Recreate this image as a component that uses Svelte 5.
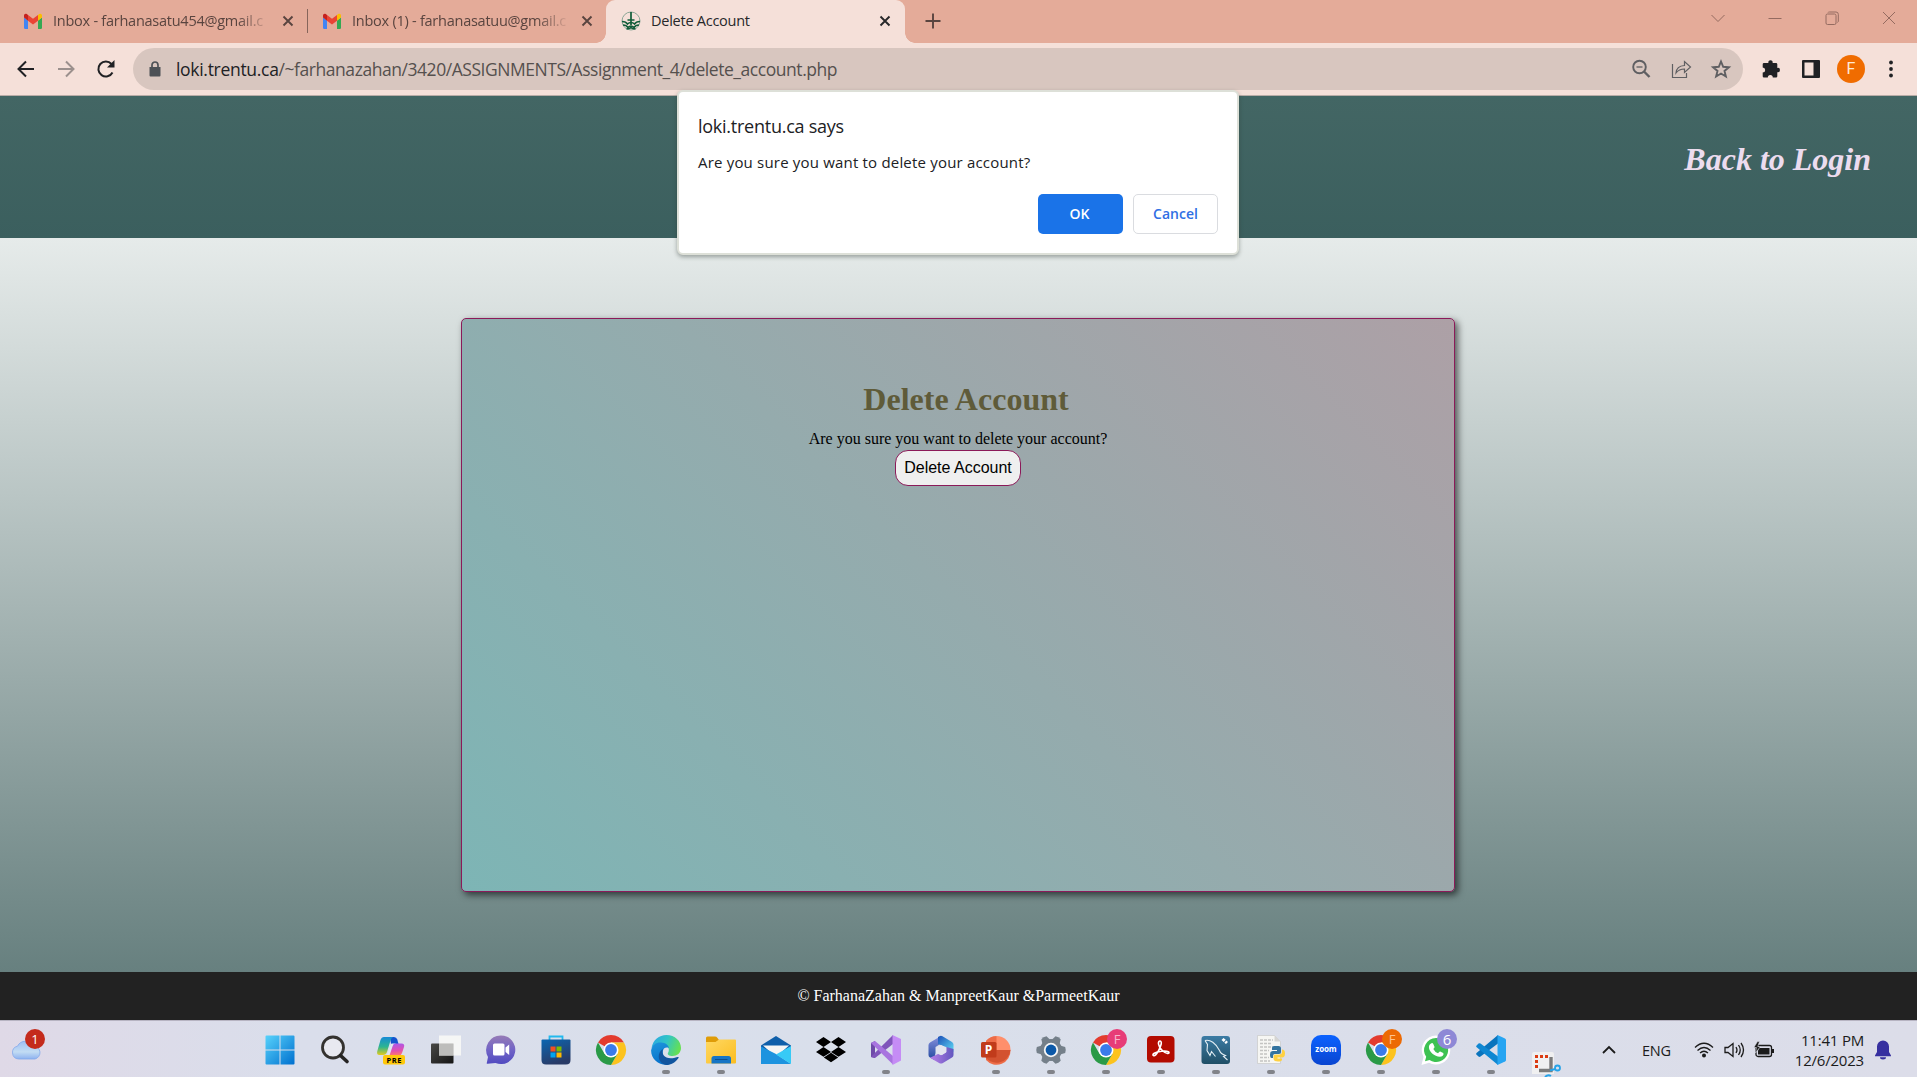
<script>
  const apps = [
    { id: 'start' }, { id: 'search' }, { id: 'copilot' }, { id: 'taskview' }, { id: 'chat' },
    { id: 'store' }, { id: 'chrome' }, { id: 'edge', open: true }, { id: 'files', open: true },
    { id: 'mail' }, { id: 'dropbox' }, { id: 'vs', open: true }, { id: 'm365' },
    { id: 'ppt', open: true }, { id: 'settings', open: true },
    { id: 'chrome', open: true, badge: 'F', tone: 'pink' }, { id: 'acrobat', open: true },
    { id: 'mysql', open: true }, { id: 'python', open: true }, { id: 'zoom', open: true },
    { id: 'chrome', open: true, badge: 'F', tone: 'orange' },
    { id: 'whatsapp', open: true, badge: '6', tone: 'violet' }, { id: 'vscode', open: true },
    { id: 'snip' }
  ];
</script>

{#snippet gmail()}
  <svg class="fav" viewBox="0 0 20 16">
    <path fill="#4285f4" d="M1 4.500 5 7.500V16H2.200Q1 16 1 14.800z" />
    <path fill="#34a853" d="M15 7.500l4-3v10.300q0 1.200-1.200 1.200H15z" />
    <path fill="#fbbc04" d="M15 2l1.200-.9C17.600 0 19 1 19 2.600v2L15 7.700z" />
    <path fill="#ea4335" d="M5 7.700V2l5 3.800L15 2v5.700l-5 3.800z" />
    <path fill="#c5221f" d="M1 4.600v-2C1 1 2.400 0 3.800 1.100L5 2v5.700z" />
  </svg>
{/snippet}

{#snippet cross()}
  <svg class="cross" viewBox="0 0 12 12"><path d="M1.500 1.500l9 9M10.500 1.500l-9 9" /></svg>
{/snippet}

{#snippet icon(id)}
  <svg class="app-icon" viewBox="0 0 30 30">
    {#if id === 'start'}
      <defs><linearGradient id="win" x1="0" y1="0" x2="1" y2="1"><stop offset="0" stop-color="#57d2fb" /><stop offset="1" stop-color="#0070cf" /></linearGradient></defs>
      <path fill="url(#win)" d="M1.500.5H14.500v14H.5v-13Q.5.5 1.500.5zM15.500 .5h13q1 0 1 1v13h-14zM.5 15.500h14v14h-13q-1 0-1-1zM15.500 15.500h14v13q0 1-1 1h-13z" />
    {:else if id === 'search'}
      <circle cx="12" cy="12.500" r="10.500" fill="#e8e9f0" stroke="#34322f" stroke-width="2.800" />
      <path d="M19.500 20.500l6.500 6" stroke="#252423" stroke-width="3.600" stroke-linecap="round" />
    {:else if id === 'copilot'}
      <defs>
        <linearGradient id="cpa" x1="0" y1="0" x2="0" y2="1"><stop offset="0" stop-color="#168bd5" /><stop offset=".55" stop-color="#2db591" /><stop offset="1" stop-color="#e4cb1b" /></linearGradient>
        <linearGradient id="cpb" x1=".3" y1="0" x2=".4" y2="1"><stop offset="0" stop-color="#a958eb" /><stop offset=".6" stop-color="#e24fb0" /><stop offset="1" stop-color="#ff786a" /></linearGradient>
      </defs>
      <path fill="#1454cf" d="M14 2h4q2.500 0 3.300 2.500L22.500 9H15z" />
      <path fill="url(#cpa)" d="M8 2h10q-2.500 0-3.500 3.500L11 17q-1 3-4 3H3.500Q.5 20 1.200 16.500L4.500 5Q5.500 2 8 2z" />
      <path fill="#dfe6f2" d="M15.500 8.500H20l-3 1.500-3.500 10H11z" />
      <path fill="url(#cpb)" d="M19 8.500h6.500q3.500 0 2.500 3.500l-2 6q-.8 2.500-3 2.500H13.500l3-9q.8-3 2.500-3z" />
      <rect x="7" y="20" width="22" height="9.500" rx="2" fill="#ffc80a" />
      <text x="18.300" y="27.600" class="pre">PRE</text>
    {:else if id === 'taskview'}
      <defs><linearGradient id="tva" x1="0" y1="0" x2="1" y2="1"><stop offset="0" stop-color="#484846" /><stop offset="1" stop-color="#151515" /></linearGradient></defs>
      <rect x="0" y="8.500" width="22.500" height="20" rx="1" fill="url(#tva)" />
      <path d="M8 .5h22v20H8z" fill="#f7f7f5" opacity=".92" />
      <path d="M8 8.500h14.500v12H8z" fill="#bdbdbb" />
    {:else if id === 'chat'}
      <defs><linearGradient id="cha" x1="0" y1="0" x2="0" y2="1"><stop offset="0" stop-color="#967bb6" /><stop offset=".5" stop-color="#7164c6" /><stop offset="1" stop-color="#514bc0" /></linearGradient></defs>
      <path fill="url(#cha)" d="M15 .5a14.300 14.300 0 1 1-5.500 27.500L1.500 28.700Q.3 28.700.9 27.500L2 22A14.500 14.500 0 0 1 15 .5z" />
      <rect x="7" y="8.500" width="11.500" height="12" rx="1.500" fill="#fff" />
      <path fill="#fff" d="M19.500 12.500l3.700-3v10.500l-3.700-3z" />
    {:else if id === 'store'}
      <defs><linearGradient id="sta" x1="0" y1="0" x2=".4" y2="1"><stop offset="0" stop-color="#0b66b2" /><stop offset="1" stop-color="#293b67" /></linearGradient></defs>
      <path d="M8.500 5V1.500h13V5" fill="none" stroke="#23b9ee" stroke-width="1.800" />
      <path fill="url(#sta)" d="M1.500 4.500h27q1 0 1 1V25q0 4.500-4.500 4.500H5Q.5 29.500.5 25V5.500q0-1 1-1z" />
      <path fill="#f25022" d="M9.500 11.500h5v5h-5z" /><path fill="#7fba00" d="M15.500 11.500h5v5h-5z" />
      <path fill="#00a4ef" d="M9.500 17.500h5v5h-5z" /><path fill="#ffb900" d="M15.500 17.500h5v5h-5z" />
    {:else if id === 'chrome'}
      <path fill="#e33b2e" d="M15 15 2 7.500A15 15 0 0 1 28 7.500H15z" />
      <path fill="#fcc31e" d="M28 7.500A15 15 0 0 1 15 30l6.500-11.200L15 7.500z" />
      <path fill="#2a9a47" d="M2 7.500A15 15 0 0 0 15 30l6.500-11.200L8.500 18.800z" />
      <circle cx="15" cy="15" r="7.500" fill="#fff" /><circle cx="15" cy="15" r="5.900" fill="#3a7bea" />
    {:else if id === 'edge'}
      <defs>
        <linearGradient id="eda" x1="0" y1=".2" x2="1" y2=".5"><stop offset="0" stop-color="#2aa7e4" /><stop offset=".5" stop-color="#31c5c5" /><stop offset="1" stop-color="#66e052" /></linearGradient>
        <linearGradient id="edb" x1="0" y1="0" x2=".3" y2="1"><stop offset="0" stop-color="#1e96dc" /><stop offset="1" stop-color="#0872cb" /></linearGradient>
      </defs>
      <path fill="url(#eda)" d="M.5 13C2 5 8 0 15.500 0 24 0 30 6 30 13c0 5-4 8-8.500 8-3.500 0-5.500-1.500-4.500-3 3-5-2-9-7-8.500C5 9.800 1.500 11.500.5 13z" />
      <path fill="url(#edb)" d="M.1 15.500C1 9.500 6 7 10 7.500c4.500.4 7.500 2.500 8 5.500-6-2-7.500 4-5 9 2 4 4.500 5.500 7 6.800C11 32 0 26 .1 15.500z" />
      <path fill="#11559f" d="M12 14c-2.500 6 3.500 12 14.500 8 .8-.3 1.500.2 1 1-3 4.500-7.500 7-12.500 7C6 28 6 17 12 14z" />
    {:else if id === 'files'}
      <defs><linearGradient id="fia" x1="0" y1="0" x2="1" y2="1"><stop offset="0" stop-color="#ffd863" /><stop offset="1" stop-color="#fbbd20" /></linearGradient></defs>
      <path fill="#df9c08" d="M0 3q0-1.500 1.500-1.500H9q1.500 0 2.300 1.300L13 5v4H0z" />
      <path fill="url(#fia)" d="M0 7h9.500L13 4.500h16q1 0 1 1v22q0 1-1 1H1q-1 0-1-1z" />
      <path fill="#1675c5" d="M5.500 28.500v-5q0-2.500 2.500-2.500h14.500q2.500 0 2.500 2.500v5z" />
      <path d="M9 24.500h12.500" stroke="#0b4f90" />
    {:else if id === 'mail'}
      <path fill="#0f5faa" d="M15 1l15 9.500v6H0v-6z" /><path fill="#f5f5f5" d="M2 10.500h26L15 22z" />
      <path fill="#1d93df" d="M0 11.500L15 19l15 10H0z" /><path fill="#37caf6" d="M30 11v18L15 19.500z" />
    {:else if id === 'dropbox'}
      <path d="M7.500 2l7.500 5-7.500 5L0 7zM22.500 2L30 7l-7.500 5L15 7zM7.500 12l7.500 5-7.500 4.700L0 17zM22.500 12l7.500 5-7.500 4.700L15 17zM15 17.800l7.200 4.700L15 27.300l-7.200-4.800z" />
    {:else if id === 'vs'}
      <path fill="#6e4aa8" d="M0 8l4-2v17l-4-1z" />
      <path fill="#7f55ba" d="M0 22l4 1L22 9V0L3.300 18.500z" />
      <path fill="#a874df" d="M0 8l4-2L22 21v8.500z" />
      <path fill="#c58cf5" d="M21.500 0L30 4v21.500L21.500 30z" />
    {:else if id === 'm365'}
      <defs>
        <linearGradient id="ma" x1="0" y1="0" x2="0" y2="1"><stop offset="0" stop-color="#8791de" /><stop offset="1" stop-color="#23499f" /></linearGradient>
        <linearGradient id="mb" x1="0" y1="0" x2="1" y2="1"><stop offset="0" stop-color="#1c50b8" /><stop offset="1" stop-color="#60dcf6" /></linearGradient>
        <linearGradient id="mc" x1="0" y1="0" x2="1" y2="0"><stop offset="0" stop-color="#b97fe8" /><stop offset="1" stop-color="#6257bf" /></linearGradient>
      </defs>
      <path fill="url(#ma)" d="M15 1L4 7.500Q2.500 8.500 2.500 10v10q0 1.500 1.500 2.500l4 2.300L9.500 18v-6L19 6z" />
      <path fill="url(#mb)" d="M12 2l1.500-.8Q15 .5 16.500 1.300L26 7q1.500 1 1.500 2.500V17L20 12l-8-3z" />
      <path fill="url(#mc)" d="M27.500 14v6q0 1.500-1.500 2.500l-9.500 5.700q-1.500.8-3 0L4 22.700 12 19l4 1 4.500-3v-5z" />
      <path fill="#e2e4ef" d="M15 10l5 2.800v4.600L15 20.300l-5-2.900v-4.600z" />
    {:else if id === 'ppt'}
      <path fill="#ed6c47" d="M15.500 1A14 14 0 0 0 5 5.700V25a14 14 0 0 0 24.500-10z" />
      <path fill="#ff8f6b" d="M15.500 1a14 14 0 0 1 14 14h-14z" /><path fill="#d35230" d="M3 15h26.500A14 14 0 0 1 3 20z" />
      <rect y="7" width="15.500" height="15.500" rx="1.500" fill="#c13b1b" />
      <text x="7.600" y="19" class="letter">P</text>
    {:else if id === 'settings'}
      <g fill="#75808a">
        <circle cx="15" cy="15" r="11" />
        {#each [0, 60, 120, 180, 240, 300] as a}<path transform="rotate({a + 30} 15 15)" d="M10.500 6L12 .8Q15-.3 18 .8L19.500 6z" />{/each}
      </g>
      <circle cx="15" cy="15" r="7.200" fill="#f6f6f6" /><circle cx="15" cy="15" r="5.400" fill="#0c59a8" />
    {:else if id === 'acrobat'}
      <rect x="1" y="1" width="27.500" height="26.500" rx="4" fill="#b30b00" />
      <path fill="none" stroke="#fff" stroke-width="1.600" d="M7.500 20.500c-2-1 1.500-3.500 8-4.300 7-.9 9 1.800 6.500 2.200-3 .5-9-5-9.500-9.400C12 5 16 5 15.200 9 14.500 12.500 10 22 7.500 20.500z" />
    {:else if id === 'mysql'}
      <defs><linearGradient id="mys" x1="0" y1="0" x2="0" y2="1"><stop offset="0" stop-color="#3c7ca5" /><stop offset="1" stop-color="#204f66" /></linearGradient></defs>
      <rect x=".5" y="1" width="28.500" height="28" rx="3" fill="url(#mys)" />
      <path fill="none" stroke="#e3eef4" stroke-width="1.100" d="M4 5.500c5-1.500 11 3 14.500 10 1 3 3 4 6 5l-2 1 4 3.500M4 5.500l2.500 4-.5 6 3 5 1.500-4 4 5" />
      <path d="M21.500 4l4.500 4" stroke="#fff" stroke-width="3" stroke-dasharray="3 .8" />
    {:else if id === 'python'}
      <path fill="#f6f6f3" stroke="#c9c9c9" stroke-width=".7" d="M1.500.5h17l6 6V28.500h-23z" /><path fill="#d5d5d3" d="M18.500.5l6 6h-6z" />
      <path d="M4 5h13M4 8.500h11M4 12h13M4 15.500h9M4 19h8M4 22.500h9M4 26h10" stroke="#c4c4c2" stroke-width="1.600" stroke-dasharray="3 1" />
      <path fill="#34749f" d="M18 11h4.500q2.500 0 2.500 2.500V17q0 2-2 2h-4q-2 0-2 2v2h-1.500Q14 23 14 19.500t3-3.500h4v-1h-5v-2q0-2 2-2z" />
      <path fill="#ffd140" d="M26 14.500q3 0 3 4t-3 4h-4.500v1H26v1q0 2-4 2t-4.500-2.500v-3q0-1.500 2-1.500h4q2.500 0 2.500-2.500z" />
    {:else if id === 'zoom'}
      <defs><linearGradient id="zo" x1="0" y1="0" x2="0" y2="1"><stop offset="0" stop-color="#0b62ff" /><stop offset="1" stop-color="#0a45d0" /></linearGradient></defs>
      <rect width="30" height="30" rx="10" fill="url(#zo)" /><text x="15" y="17.300" class="zoom">zoom</text>
    {:else if id === 'whatsapp'}
      <path fill="#fff" d="M15 .5A14.500 14.500 0 1 1 8 27.800L.5 30l2-8A14.500 14.500 0 0 1 15 .5z" />
      <path fill="#3dc252" d="M15 3A12 12 0 1 1 8.500 25L4 26.200l1.200-4.500A12 12 0 0 1 15 3z" />
      <path fill="#fff" d="M10 8.500q1.500-1 2.300.5l1.200 2.700q.3.800-1.200 2.300 1.700 3.200 4.700 4.300 1.500-2 2.200-1.700l3 1.500q1 1-.5 2.700c-4 3.700-15-3.300-13.700-9.800q.5-1.600 2-2.500z" />
    {:else if id === 'vscode'}
      <path fill="#0a74bd" d="M2.500 21.500L.3 19.400q-.5-.6.200-1.400L22 0v8.500L4.500 21.500q-1 .8-2 0z" /><path fill="#0f87d2" d="M4.500 8.500L22 21.500V30L.4 12q-.6-.6 0-1.200L2.500 8.600q1-.8 2-.1z" />
      <path fill="#27a5f2" d="M21.500 0L29 3.500q1 .5 1 1.500v20q0 1-1 1.500L21.500 30z" />
    {:else}
      <path fill="#f0f0f1" d="M1 5q0-2 2-2h18q2 0 2 2v20H1z" />
      <path fill="none" stroke="#db3a12" stroke-width="3" stroke-dasharray="3 2" d="M5.500 19V7.500M4 7.500h14" />
      <path d="M8 21.500h12V8" fill="none" stroke="#7b7b7c" stroke-width="3.400" />
      <path d="M19 21.500l5-1.500M14 28q3-3 6-1" stroke="#26a3e8" stroke-width="2" fill="none" /><circle cx="26.500" cy="19" r="2.500" fill="none" stroke="#26a3e8" stroke-width="1.800" />
    {/if}
  </svg>
{/snippet}

<div class="screen">
  <div class="tabs">
    <div class="tab first">{@render gmail()}<span class="title fade">Inbox - farhanasatu454@gmail.c</span>{@render cross()}</div>
    <div class="tab second">{@render gmail()}<span class="title fade">Inbox (1) - farhanasatuu@gmail.c</span>{@render cross()}</div>
    <div class="tab active">
      <svg class="crest" viewBox="0 0 20 20">
        <circle cx="10" cy="10" r="9" fill="none" stroke="#8ba696" />
        <g fill="none" stroke="#105c38" stroke-width="1.700"><path d="M10 1v13M6.500 9h7M1 10.500q4 0 5.500 2.500 1.500-1.500 3.500-1.500t3.500 1.500q1.500-2.500 5.500-2.500M2 14q3.500 0 5 2.500Q8.500 15 10 15t3 1.500q1.500-2.500 5-2.500M5.500 18q3 0 4.500-1.500 1.500 1.500 4.500 1.500" /></g>
      </svg>
      <span class="title">Delete Account</span>{@render cross()}
    </div>
    <svg class="plus" viewBox="0 0 16 16"><path d="M8 .5v15M.5 8h15" /></svg>
    <div class="window-controls">
      <svg viewBox="0 0 14 14"><path d="M.5 4l6.500 6.500L13.500 4" /></svg>
      <svg viewBox="0 0 14 14"><path d="M.5 7.500h13" /></svg>
      <svg viewBox="0 0 14 14"><rect x="1" y="3" width="10" height="10.500" rx="1.500" /><path d="M3 1.500Q3 1 4.500 1H11q2.300 0 2.300 2.300V10q0 1-.8 1.500" /></svg>
      <svg viewBox="0 0 14 14"><path d="M1 1l12 12M13 1L1 13" /></svg>
    </div>
  </div>

  <div class="toolbar">
    <div class="nav">
      <svg viewBox="0 0 20 20"><path d="M18 10H3M10 2.500L2.500 10l7.500 7.500" /></svg>
      <svg class="dim" viewBox="0 0 20 20"><path d="M2 10h15M10 2.500l7.500 7.500-7.500 7.500" /></svg>
      <svg viewBox="0 0 20 20"><path d="M16.500 13.500A7.500 7.500 0 1 1 15.500 5" /><path class="solid" d="M18.500 1v7.500H11z" /></svg>
    </div>
    <div class="omnibox">
      <svg class="lock" viewBox="0 0 12 16"><path d="M.5 6h11v8.500q0 1-1 1h-9q-1 0-1-1z" fill="#4d5156" /><path d="M3 7V4a3 3 0 0 1 6 0v3" fill="none" stroke="#4d5156" stroke-width="1.700" /></svg>
      <span class="url"><b>loki.trentu.ca</b>/~farhanazahan/3420/ASSIGNMENTS/Assignment_4/delete_account.php</span>
      <div class="actions">
        <svg viewBox="0 0 20 20"><circle cx="8.500" cy="8" r="6.300" /><path d="M5.500 8h6" stroke-width="1.300" /><path d="M13 12.500l5.500 5.500" stroke-width="2.400" /></svg>
        <svg viewBox="0 0 20 20" class="thin"><path d="M1.500 5v13.500h14V14M5 14q.5-7 8.500-7.500V2.500L19.500 8l-6 5.500V10Q8 10 5 14z" /></svg>
        <svg viewBox="0 0 20 20"><path d="M10 2.500l2.200 5.300 5.700.4-4.400 3.700 1.400 5.600-4.900-3-4.900 3 1.400-5.600L2.100 8.200l5.700-.4z" /></svg>
      </div>
    </div>
    <div class="extras">
      <svg viewBox="0 0 20 20"><path fill="#202124" d="M3 4h4.400a2.200 2.200 0 1 1 4.200 0H15q1.300 0 1.300 1.300v3.600a2.200 2.200 0 1 1 0 4.300v4q0 1.300-1.300 1.300h-3.200a2.500 2.500 0 0 0-5 0H3q-1.300 0-1.300-1.300v-3.600a2.500 2.500 0 0 0 0-5V5.300Q1.700 4 3 4z" /></svg>
      <svg viewBox="0 0 20 20"><path fill="#202124" fill-rule="evenodd" d="M2 1h16q1 0 1 1v16q0 1-1 1H2q-1 0-1-1V2q0-1 1-1zM3.500 3.500v13h9v-13z" /></svg>
      <span class="avatar">F</span>
      <svg viewBox="0 0 20 20"><circle cx="10" cy="3.500" r="1.900" /><circle cx="10" cy="10" r="1.900" /><circle cx="10" cy="16.500" r="1.900" /></svg>
    </div>
  </div>

  <header><a href="#login">Back to Login</a></header>
  <main>
    <section>
      <h1>Delete Account</h1>
      <p>Are you sure you want to delete your account?</p>
      <button>Delete Account</button>
    </section>
  </main>
  <footer>© FarhanaZahan &amp; ManpreetKaur &amp;ParmeetKaur</footer>

  <div class="taskbar">
    <div class="weather">
      <svg viewBox="0 0 32 20"><defs><linearGradient id="cl" x1="0" y1="0" x2="0" y2="1"><stop offset="0" stop-color="#9fbff3" /><stop offset=".6" stop-color="#c2dcf3" /><stop offset="1" stop-color="#8eb2ef" /></linearGradient></defs>
        <path fill="url(#cl)" stroke="#82a8eb" stroke-width=".8" d="M7.500 19a6.500 6.500 0 0 1-1-12.800A9 9 0 0 1 22.500 6 6.600 6.600 0 0 1 24 19z" /></svg>
      <span class="badge red">1</span>
    </div>
    <div class="apps">
      {#each apps as app}
        <div class={['app', app.id]}>
          {@render icon(app.id)}
          {#if app.badge}<span class={['badge', app.tone]}>{app.badge}</span>{/if}
          {#if app.open}<i></i>{/if}
        </div>
      {/each}
    </div>
    <div class="tray">
      <svg class="caret" viewBox="0 0 14 8"><path d="M1 7l6-6 6 6" /></svg>
      <span class="lang">ENG</span>
      <svg class="sys" viewBox="0 0 20 16"><path d="M1 5.500q9-8.500 18 0M3.500 8.500q6.500-6 13 0M6 11q4-3.500 8 0" /><circle cx="10" cy="13.500" r="2" fill="#1b1b1b" stroke="none" /></svg>
      <svg class="sys" viewBox="0 0 20 16"><path d="M1 5.500h3L9 1.500v13l-5-4H1zM12 5q2 3 0 6M14.500 3q3.500 5 0 10M17 1q5 7 0 14" /></svg>
      <svg class="sys" viewBox="0 0 20 16"><rect x="2" y="3.500" width="15.500" height="11" rx="2" /><path d="M5 6h10.500v6.500H4V9z" fill="#1b1b1b" stroke="none" /><path d="M19 7v4" stroke-width="2" /><path d="M3.500-.5L-.2 5.500h2.600L1.500 11l5-6.500H3.800L5.500-.5z" fill="#1b1b1b" stroke="#dcdde9" stroke-width=".6" /></svg>
      <div class="clock"><span>11:41 PM</span><span>12/6/2023</span></div>
      <svg class="bell" viewBox="0 0 16 20"><path fill="#3730a0" d="M8 .5a6 6 0 0 1 6 6V12l2 3.500v.8H0v-.8L2 12V6.500a6 6 0 0 1 6-6zM5 17.300h6a3 2.200 0 0 1-6 0z" /></svg>
    </div>
  </div>

  <div class="dialog" role="dialog">
    <h2>loki.trentu.ca says</h2>
    <p>Are you sure you want to delete your account?</p>
    <div class="buttons"><button class="ok">OK</button><button class="cancel">Cancel</button></div>
  </div>
</div>

<style>
  .screen { position: relative; width: 1917px; height: 1077px; overflow: hidden; display: flex; flex-direction: column; font-family: 'Open Sans', 'Noto Sans', sans-serif; }
  svg { display: block; flex: none; overflow: visible; }
  .tabs { height: 43px; flex: none; background: #e4ab99; display: flex; align-items: center; color: #59443f; font-size: 14.500px; }
  .tab { display: flex; align-items: center; height: 43px; padding-bottom: 2px; box-sizing: border-box; position: relative; }
  .first { width: 308px; padding-left: 23px; }
  .first::after { content: ''; position: absolute; right: 0; top: 9px; width: 1px; height: 24px; background: #86655b; }
  .second { width: 298px; padding-left: 14px; }
  .active { width: 299px; padding-left: 15px; background: #f5e0d9; color: #27282a; border-radius: 9px 9px 0 0; }
  .active::before, .active::after { content: ''; position: absolute; bottom: 0; width: 10px; height: 10px; }
  .active::before { left: -10px; background: radial-gradient(circle at 0 0, transparent 9.500px, #f5e0d9 10px); }
  .active::after { right: -10px; background: radial-gradient(circle at 100% 0, transparent 9.500px, #f5e0d9 10px); }
  .fav { width: 20px; height: 16px; margin-right: 10px; }
  .crest { width: 20px; height: 20px; margin-right: 10px; }
  .title { width: 214px; white-space: nowrap; letter-spacing: -0.25px; }
  .fade { mask-image: linear-gradient(90deg, #000 86%, transparent 102%); }
  .cross { width: 12px; height: 12px; margin-left: 15px; }
  .active .cross { margin-left: 14px; }
  .cross path, .plus path { fill: none; stroke: currentColor; stroke-width: 1.900; }
  .plus { width: 16px; height: 16px; margin-left: 20px; padding-bottom: 1px; }
  .window-controls { margin-left: auto; display: flex; gap: 43px; padding: 0 21px 7px 0; }
  .window-controls svg { width: 14px; height: 14px; fill: none; stroke: #946b60; stroke-width: 1; }

  .toolbar { height: 53px; flex: none; box-sizing: border-box; background: #f5e0d9; border-bottom: 1px solid #b9aca7; display: flex; align-items: center; }
  .nav { width: 127px; padding-left: 6px; display: flex; }
  .nav svg { width: 20px; height: 20px; margin: 0 10px; fill: none; stroke: #202124; stroke-width: 2; }
  .nav .dim { stroke: #9b908d; }
  .nav .solid { fill: #202124; stroke: none; }
  .omnibox { width: 1610px; height: 42px; border-radius: 21px; background: #d8c6bf; display: flex; align-items: center; box-sizing: border-box; padding: 0 12px 0 16px; }
  .lock { width: 12px; height: 16px; margin-right: 15px; }
  .url { font-size: 17.500px; color: #55504e; letter-spacing: -0.450px; white-space: nowrap; }
  .url b { font-weight: 400; color: #202124; letter-spacing: -.3px; }
  .actions { margin-left: auto; display: flex; gap: 20px; }
  .actions svg { width: 20px; height: 20px; fill: none; stroke: #5f5f62; stroke-width: 1.900; }
  .actions .thin { stroke-width: 1.200; }
  .extras { display: flex; padding-left: 8px; align-items: center; }
  .extras svg { width: 20px; height: 20px; margin: 0 10px; fill: #202124; }
  .avatar { width: 28px; height: 28px; margin: 0 6px; border-radius: 50%; background: #f06c00; color: #ffe9d8; font: 16px/28px Roboto, sans-serif; text-align: center; }

  header { height: 142px; flex: none; background: linear-gradient(#436664, #3b5f5e); display: flex; justify-content: flex-end; box-sizing: border-box; padding: 45px 46px 0 0; font-family: 'Liberation Serif', serif; }
  header a { color: #ecdcef; font-weight: bold; font-style: italic; font-size: 32px; line-height: 36px; text-decoration: none; }
  main { flex: none; height: 734px; background: linear-gradient(#e6ebea, #67807f); display: flex; justify-content: center; align-items: flex-start; box-sizing: border-box; padding: 80px 1px 0 0; font-family: 'Liberation Serif', serif; }
  section { width: 994px; height: 574px; box-sizing: border-box; border: 1px solid #8b1a59; border-radius: 5px; background: linear-gradient(45deg, #7db5b5, #95abad 50%, #ada0a6); box-shadow: 3px 3px 7px rgba(0, 0, 0, .6); display: flex; flex-direction: column; align-items: center; padding-top: 61px; }
  h1 { margin: 0; padding-left: 16px; color: #5f5b39; font-size: 32px; line-height: 38px; }
  section p { margin: 12px 0 2px; font-size: 16px; line-height: 18px; }
  section button { width: 126px; height: 36px; padding: 0; border: 1px solid #8b1a59; border-radius: 13px; background: #efefef; font: 16px 'Liberation Sans', sans-serif; color: #000; }
  footer { height: 48px; flex: none; background: #222; color: #fff; text-align: center; font: 16px/47px 'Liberation Serif', serif; }

  .taskbar { flex: 1; box-sizing: border-box; border-top: 1px solid #b7b4c2; background: linear-gradient(90deg, #dfd9e7, #dadeeb 15%, #d9dfeb 45%, #dcdde9); display: flex; }
  .weather { width: 251px; position: relative; box-sizing: border-box; padding: 19px 0 0 11px; }
  .weather svg { width: 32px; height: 20px; }
  .badge { position: absolute; width: 20px; height: 20px; border-radius: 50%; font-size: 13px; line-height: 20px; text-align: center; color: #fff; }
  .red { left: 25px; top: 8px; background: #c42b1c; }
  .apps { display: flex; }
  .app { width: 55px; position: relative; display: flex; flex-direction: column; align-items: center; padding-top: 14px; box-sizing: border-box; }
  .start { width: 57px; }
  .app-icon { width: 30px; height: 30px; }
  .snip .app-icon { margin-top: 14px; }
  .app i { width: 8px; height: 4px; border-radius: 2px; background: #818389; margin-top: 5px; }
  .app .badge { left: 29px; top: 8px; }
  .pink { background: #e73c77; color: #f7b4cc; }
  .orange { background: #ec6a04; color: #ffc28e; }
  .violet { background: #8e88d6; font-size: 15px; }
  .pre { font: bold 7.500px 'Open Sans', sans-serif; letter-spacing: .6px; text-anchor: middle; }
  .letter { font: bold 12px 'Open Sans', sans-serif; text-anchor: middle; fill: #fff; }
  .zoom text { font: bold 8px 'Open Sans', sans-serif; letter-spacing: -.1px; text-anchor: middle; fill: #fff; }
  .tray { margin-left: auto; display: flex; align-items: center; color: #1b1b1b; padding: 0 26px 0 0; }
  .tray svg { fill: none; stroke: #1b1b1b; stroke-width: 1.300; }
  .caret { width: 14px; height: 8px; margin-right: 26px; }
  .tray .caret { stroke-width: 1.800; }
  .lang { width: 52px; font-size: 14.500px; letter-spacing: -.2px; }
  .sys { width: 20px; height: 16px; margin-right: 10px; }
  .clock { width: 80px; display: flex; flex-direction: column; text-align: right; font-size: 15px; line-height: 20px; letter-spacing: -.2px; margin-right: 11px; }
  .bell { width: 16px; height: 20px; }
  .tray .bell { stroke: none; }

  .dialog { position: absolute; left: 677px; top: 90px; width: 562px; height: 165px; box-sizing: border-box; background: #fff; border: 2px solid #dde0d8; border-radius: 6px; box-shadow: 0 2px 4px rgba(40, 50, 45, .4); padding: 21px 19px 19px; color: #202124; display: flex; flex-direction: column; }
  h2 { margin: 0; font-weight: 400; font-size: 18px; line-height: 26px; letter-spacing: -.25px; }
  .dialog p { margin: 13px 0 0; font-size: 15px; line-height: 20px; letter-spacing: .19px; }
  .buttons { margin-top: auto; display: flex; justify-content: flex-end; gap: 10px; }
  .buttons button { width: 85px; height: 40px; border-radius: 5px; font: 600 14px 'Open Sans', sans-serif; padding: 0 0 2px; }
  .ok { background: #1a73e8; color: #fff; border: 0; }
  .buttons .ok { padding-right: 2px; }
  .cancel { background: #fff; color: #2f6fe4; border: 1px solid #dadce0; }
</style>
